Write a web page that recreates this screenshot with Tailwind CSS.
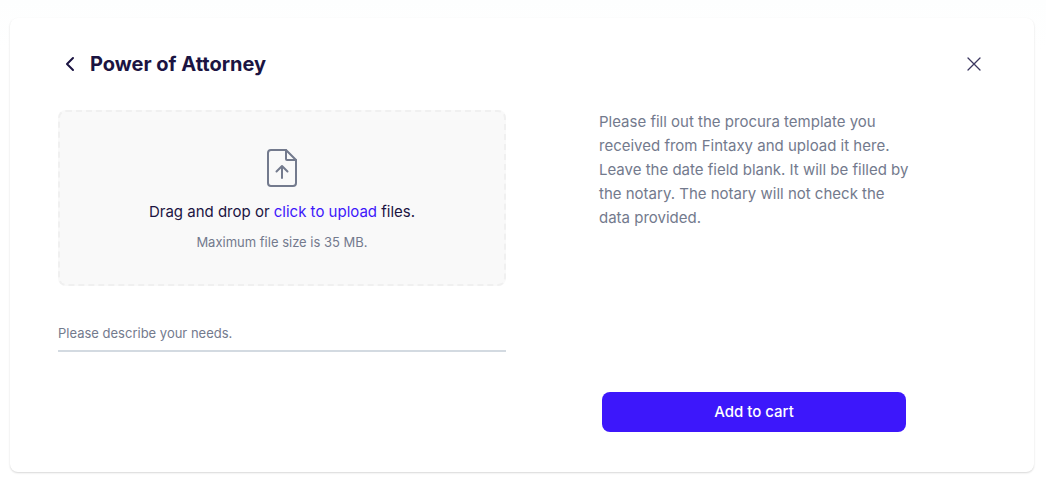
<!DOCTYPE html>
<html lang="en">
<head>
    <meta charset="UTF-8">
    <meta name="viewport" content="width=device-width, initial-scale=1.0">
    <title>Power of Attorney</title>

    <!-- Include Tailwind CSS via CDN -->
    <script src="https://cdn.jsdelivr.net/npm/@tailwindcss/browser@4"></script>
</head>
<body class="min-h-screen bg-linear-to-b from-[#fdfefe] to-white to-10% pt-[18px] pb-4 pl-[10px] pr-3 font-['Inter',sans-serif] text-[#1b1442]">
    <main class="bg-white rounded-lg shadow-[0_1px_2px_rgba(0,0,0,0.16)] px-12 pt-8 pb-10">
        <!-- Header -->
        <header class="flex items-center justify-between h-7">
            <div class="flex items-center gap-2">
                <button type="button" aria-label="Back" class="size-6 flex items-center justify-center cursor-pointer">
                    <svg class="size-6" viewBox="0 0 24 24" fill="none" stroke="currentColor" stroke-width="2" stroke-linecap="round" stroke-linejoin="round">
                        <path d="M15 6l-6 6 6 6"/>
                    </svg>
                </button>
                <h1 class="text-xl font-bold">Power of Attorney</h1>
            </div>
            <button type="button" aria-label="Close" class="size-6 flex items-center justify-center cursor-pointer">
                <svg class="size-6" viewBox="0 0 24 24" fill="none" stroke="#3b3760" stroke-width="1.3" stroke-linecap="round">
                    <path d="M6 6l12 12M18 6L6 18"/>
                </svg>
            </button>
        </header>

        <form id="uploadForm" class="mt-8 grid grid-cols-[448fr_387fr] gap-[93px]">
            <div>
                <!-- Drop zone -->
                <label for="file" class="flex flex-col items-center h-44 pt-9 rounded-lg border-2 border-dashed border-[#f0f0f0] bg-[#f9f9f9] cursor-pointer">
                    <svg class="w-8 h-10" viewBox="0 0 32 40" fill="none" stroke="#737a8d" stroke-width="2" stroke-linecap="round" stroke-linejoin="round">
                        <path d="M20 2H5a3 3 0 0 0-3 3v30a3 3 0 0 0 3 3h22a3 3 0 0 0 3-3V12z"/>
                        <path d="M20 2v9a1 1 0 0 0 1 1h9"/>
                        <path d="M16 30V18M10.500 23.500L16 18l5.500 5.500"/>
                    </svg>
                    <span class="mt-3 text-[15px] leading-6">Drag and drop or <span class="text-[#3d17fb]">click to upload</span> files.</span>
                    <span class="mt-2 text-[13px] leading-5 text-[#737a8d]">Maximum file size is 35 MB.</span>
                    <input id="file" type="file" class="sr-only">
                </label>

                <!-- Needs -->
                <input id="needs" type="text" aria-label="Please describe your needs." placeholder="Please describe your needs."
                    class="block w-full mt-7 h-[38px] pt-px border-b-2 border-[#d3dae1] text-[13px] placeholder:text-[#737a8d] outline-none">
            </div>

            <div class="flex flex-col justify-between min-h-[322px] pr-[72px]">
                <p class="text-[15px] leading-6 text-[#737a8d]">Please fill out the procura template you received from Fintaxy and upload it here. Leave the date field blank. It will be filled by the notary. The notary will not check the data provided.</p>
                <button type="submit"
                    class="ml-[3px] mr-2 h-10 rounded-lg bg-[#3d17fb] text-white text-[15px] font-medium cursor-pointer">
                    Add to cart
                </button>
            </div>
        </form>
    </main>
</body>
</html>
